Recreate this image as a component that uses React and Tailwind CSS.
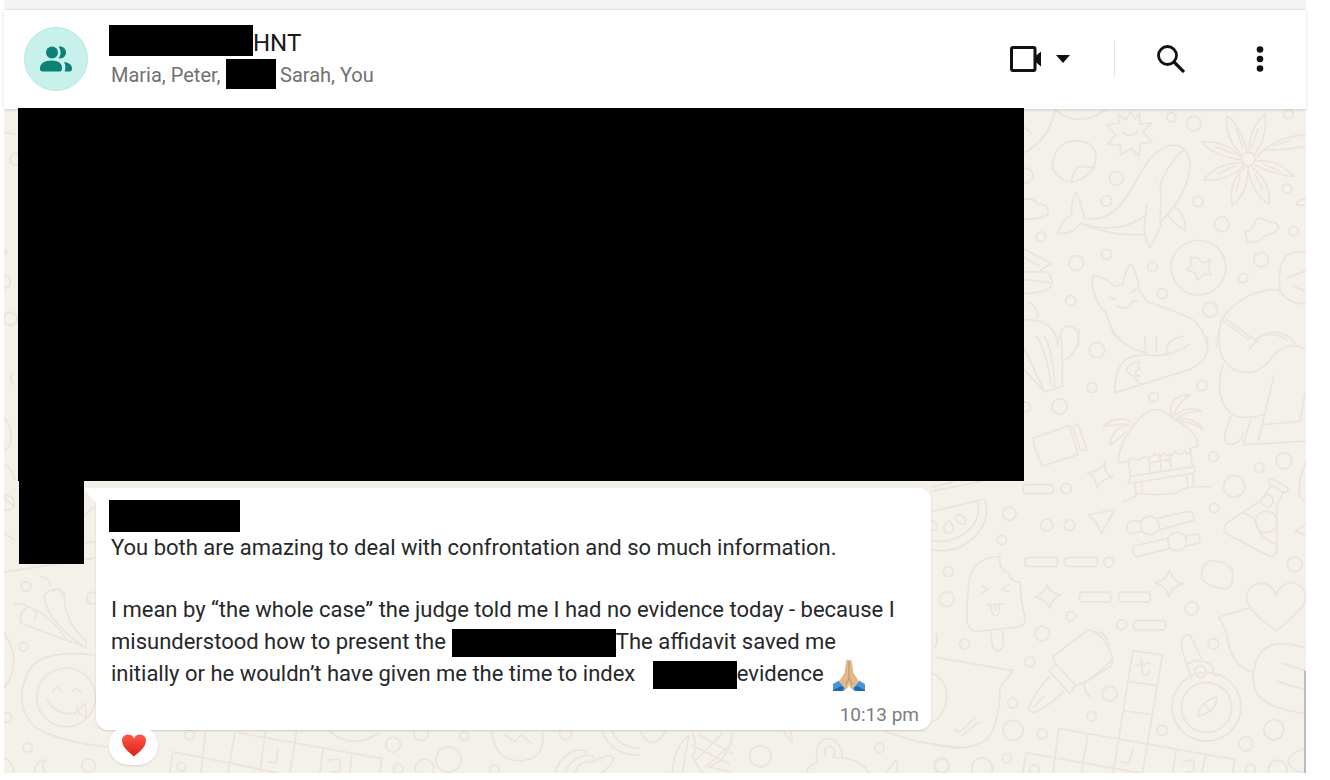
import React from 'react';
import clsx from 'clsx';

const Redacted = ({ className }) => (
  <span aria-hidden="true" className={clsx('inline-block shrink-0 bg-black', className)} />
);

const Dots = ({ items }) =>
  items.map(([cx, cy, r]) => <circle key={`${cx}-${cy}-${r}`} cx={cx} cy={cy} r={r} />);

const Strokes = ({ items }) => items.map((d) => <path key={d} d={d} />);

// each wallpaper section is drawn on its own grid, three units to a pixel
const Section = ({ x, y, paths, dots }) => (
  <g transform={`translate(${x} ${y}) scale(0.33333)`}>
    <Strokes items={paths} />
    <Dots items={dots} />
  </g>
);

const sections = [
  {
    x: 1010,
    y: 100,
    paths: [
      'M45 160 Q120 120 137 30 M45 85 L68 105',
      'M135 32 Q205 90 290 32',
      'M150 145 Q185 110 240 135 Q265 155 258 185 Q245 235 190 248 Q150 250 128 205 Q130 165 150 145 M258 205 L208 202 Q190 215 186 246',
      'M290 78 L330 72 L325 45 L350 62 L362 38 L378 60 L390 42 L390 75 L425 72 L400 100 L428 130 L392 132 L388 172 L365 148 L332 168 L332 138 L294 134 L318 108 Z M340 100 Q362 120 385 98',
      'M224 358 Q290 365 330 320 Q370 265 400 210 Q435 145 490 138 Q545 140 540 210 Q530 290 455 365 Q448 405 420 445 Q402 415 404 370 L412 315 M224 358 Q215 310 200 278 Q183 310 186 345 Q155 370 143 402 Q190 408 213 372 Q300 412 402 405 M213 372 Q330 410 412 345 M525 150 Q475 190 452 255 Q455 320 450 365 M475 348 Q495 378 527 392 Q528 345 495 320 M440 240 L442 241',
      'M695 168 Q640 110 652 52 Q690 75 712 160 M718 160 Q715 90 765 45 Q775 110 735 165 M742 172 Q800 110 885 108 M762 152 Q820 155 885 142 M738 185 Q805 180 852 232 Q790 225 735 198 M725 205 Q785 245 777 315 Q725 285 715 205 M705 205 Q655 245 667 318 Q710 290 715 210 M697 192 Q620 190 582 242 Q650 250 700 200 M693 175 Q650 125 575 128 Q610 170 693 182 M680 90 L698 145 M745 90 L725 145 M790 140 L840 125 M620 145 L675 165 M625 225 L675 200 M760 195 L810 215 M735 225 L758 270 M690 230 L680 275',
      'M45 300 Q75 295 85 315 Q120 315 115 345 Q100 360 45 360',
      'M45 450 L125 492 L90 515 M45 518 L110 518 Q128 530 128 550 Q125 580 45 583 M45 540 L120 550 M45 475 L90 500',
      'M705 400 Q730 390 740 360 Q755 352 775 368 Q805 365 806 388 Q790 405 765 410 Q735 440 712 425 Z',
      'M565 475 L578 492 L602 482 L595 505 L605 525 L580 525 L563 543 L555 520 L530 512 L545 500 L542 475 Z',
      'M272 625 Q240 560 250 530 Q285 530 315 560 Q330 560 340 555 Q345 510 365 494 Q385 530 388 570 L410 605 M272 625 L290 640 Q300 690 330 720 M300 595 L318 600 M365 580 L385 565 M320 618 Q345 640 370 605 L388 605 M410 605 Q480 630 540 655 Q580 680 592 740',
      'M810 570 Q800 470 850 460 L885 458 M805 570 Q700 570 635 660 L715 720 M635 660 Q625 700 620 740 M805 570 Q840 620 885 612 M830 535 L885 515 M850 560 L885 575 M735 720 Q780 690 830 720',
      'M45 660 Q140 660 145 740 M60 610 Q90 630 82 655 M145 740 Q150 680 180 680 Q215 690 205 740',
      'M860 315 Q865 300 885 300 M860 318 L885 318',
    ],
    dots: [
      [485, 55, 14], [552, 74, 22], [320, 238, 21], [290, 305, 16], [565, 307, 15], [636, 376, 22],
      [831, 268, 14], [851, 395, 14], [754, 481, 22], [700, 537, 14], [566, 505, 82], [428, 503, 15],
      [457, 583, 15], [291, 465, 15], [200, 492, 22], [183, 604, 15], [94, 413, 15], [48, 229, 22],
      [601, 631, 22], [715, 180, 20], [835, 45, 14],
    ],
  },
  {
    x: 1010,
    y: 330,
    paths: [
      'M45 60 L105 187 L158 170 Q160 80 155 20 M45 120 L105 187 M105 20 Q135 80 135 180 M80 20 Q110 60 125 170 M160 95 Q210 70 208 0',
      'M305 5 Q350 60 410 70 M400 75 Q470 90 540 45 M315 190 Q315 75 395 78 M315 190 L540 120 Q610 90 590 20 M350 120 Q365 95 392 98 Q375 110 390 118 Q365 130 390 140 Q360 145 350 120 M375 145 L392 165 M405 20 L408 65 M440 20 L440 68 M470 78 Q465 30 520 20',
      'M72 325 L180 288 L205 375 L98 410 L72 345 Z M190 295 L205 283 L232 360 L212 362 Z',
      'M232 428 Q270 428 285 398 Q282 435 310 442 Q270 450 262 476 Q260 440 232 428',
      'M325 395 Q330 340 370 290 Q430 205 485 265 Q560 300 565 350 L545 355 Q535 385 525 363 Q510 385 495 365 Q480 390 465 370 Q445 390 435 370 Q420 395 405 380 Q385 400 370 385 Q345 405 325 395 M365 275 Q320 255 280 292 Q320 280 360 285 Q310 290 300 345 Q330 330 350 305 M485 265 Q470 195 540 197 Q500 225 490 262 Q530 225 575 245 Q525 245 495 270 Q550 260 580 298 Q540 275 505 275',
      'M355 388 L362 435 M415 380 L422 430 M450 372 L455 425 M480 370 L484 415 M540 355 L548 410 M422 400 L484 388 M362 440 L555 410 L555 430 L355 462 Z M375 462 L380 500 M395 460 L398 485 M530 435 L535 470 M548 435 L552 465 M340 515 Q380 505 380 490 Q440 500 500 490 Q530 465 600 472',
      'M630 0 Q615 80 670 120 Q740 150 790 80 Q830 30 885 60 M650 -30 L745 40 M720 60 Q760 -10 820 15 Q850 25 855 45 M640 105 Q610 200 660 250 Q700 275 760 255 M792 138 L745 335 M762 285 L870 275 L885 190 M700 345 L885 335 M700 345 L722 270 M665 260 Q630 330 655 345 Q690 345 700 310',
      'M45 465 L125 465 Q140 478 125 492 L45 492 Q35 478 45 465',
      'M235 555 L315 540 L275 612 L262 580 Z',
      'M355 580 Q370 570 395 575 M445 565 L535 545 Q555 545 552 572 L445 602 M395 605 L360 612 Q345 600 355 580 M475 625 L375 648 Q360 665 380 682 L480 655 M525 620 L560 612 Q575 620 568 640 L525 650',
      'M780 445 L835 475 Q835 490 820 488 L778 462 Z M785 465 L755 510 L650 580 Q635 600 650 612 L780 680 Q800 680 800 660 L800 530 L820 485 M700 550 Q740 560 745 600 Q770 640 795 640',
      'M50 683 L140 683 Q150 697 140 710 L50 710 Q40 697 50 683 M170 683 L258 683 Q270 697 258 710 L170 710 Q158 697 170 683',
      'M885 400 Q850 500 885 515 M885 585 L855 605 L885 615',
    ],
    dots: [
      [262, 62, 23], [247, 174, 15], [150, 231, 23], [48, 232, 15], [576, 168, 15], [432, 203, 14],
      [611, 381, 15], [822, 394, 24], [748, 414, 14], [673, 470, 32], [613, 535, 14], [772, 513, 18],
      [769, 576, 32], [170, 477, 16], [112, 586, 18], [180, 586, 16], [0, 552, 20], [297, 697, 15],
      [420, 587, 28], [502, 635, 28],
    ],
  },
  {
    x: 920,
    y: 470,
    paths: [
      'M35 65 L185 35 M35 52 L100 38',
      'M38 125 L195 88 Q215 140 175 190 Q120 255 38 240 M175 95 Q185 150 145 185 Q95 225 38 212',
      'M75 185 Q70 165 88 152 Q108 170 98 188 Q85 195 75 185 M108 150 Q105 132 125 135 Q145 150 135 162 Q120 165 108 150',
    ],
    dots: [[38, 168, 14]],
  },
  {
    x: 920,
    y: 540,
    paths: [
      'M152 105 Q175 50 242 50 Q235 90 268 98 Q270 125 302 128 Q305 190 318 238 Q315 262 290 262 L170 275 Q145 272 143 240 Q142 165 152 105 M215 278 L218 315 Q235 350 252 315 L250 272',
      'M188 138 L206 148 L190 160 M268 135 L245 148 L268 156 M203 195 L250 192 M215 196 L218 220 Q230 235 240 218 L240 195 M228 200 L228 212',
      'M345 170 Q375 165 382 135 Q390 162 425 165 Q395 178 390 205 Q380 180 345 170 M705 128 Q740 125 750 90 Q758 125 790 132 Q755 140 747 170 Q740 138 705 128',
      'M485 157 L570 157 Q580 171 570 186 L485 186 Q473 171 485 157 M603 157 L687 157 Q698 171 687 186 L603 186 Q590 171 603 157 M647 242 L733 242 Q745 256 733 270 L647 270 Q635 256 647 242',
      'M845 115 Q845 65 880 62 Q945 75 938 105 Q940 145 915 147 Q860 140 845 115',
      'M1070 272 Q975 210 980 165 Q990 130 1030 130 Q1060 135 1068 168 Q1080 130 1120 128 Q1160 140 1156 180 Q1150 210 1070 272',
      'M985 205 L895 232 Q920 260 925 310 Q940 380 1000 397 M1158 325 Q1040 285 1010 360 Q990 420 1010 460 Q1050 510 1158 520 M1085 370 L1158 392 M1075 425 L1158 450',
      'M408 372 L400 350 L505 270 Q550 275 580 355 Q520 420 470 437 L408 372 M408 372 L388 392 L450 460 L468 435 M390 410 Q350 450 328 500 Q325 520 350 515 Q400 490 430 455 M345 500 L372 470 M535 275 Q560 280 568 315 M580 355 L575 378 L495 428 Q490 455 512 470',
      'M640 332 L728 345 L668 700 M640 332 L580 700 M627 425 L712 437 M615 512 L697 524 M665 355 L668 400 M648 378 L690 368 M668 400 Q685 415 690 390',
      'M320 638 L310 700 M320 638 L660 698 M418 565 L945 658 L938 700 M418 565 L400 700 M505 582 L485 700 M770 628 L758 700 M857 645 L845 700 M640 625 L628 670 L605 665 M790 665 Q835 650 820 680 Q835 695 800 695',
      'M800 375 L785 320 Q785 280 810 285 L845 355 M800 375 L815 415 M800 375 Q840 345 880 380 Q875 400 890 410',
      'M835 530 Q835 490 890 470 Q895 510 835 530 M850 490 L875 515',
      'M50 352 L280 392 Q260 420 242 440 Q240 560 200 600 Q150 630 100 620 L0 605 M38 400 Q85 420 82 475 Q75 530 38 545 M105 568 L122 575 L165 535 M130 585 L180 545 M50 280 Q60 300 45 325',
      'M1158 625 Q1105 640 1105 665 Q1120 700 1158 695',
    ],
    dots: [
      [87, 95, 15], [82, 178, 22], [136, 312, 15], [368, 281, 22], [454, 229, 14], [330, 366, 15],
      [570, 461, 22], [279, 489, 15], [516, 529, 14], [281, 571, 30], [368, 581, 15], [262, 654, 14],
      [68, 678, 21], [188, 684, 31], [606, 255, 15], [816, 205, 20], [881, 312, 16], [1124, 73, 22],
      [1062, 569, 30], [978, 611, 21], [727, 571, 15], [842, 395, 17], [860, 500, 103], [860, 502, 75],
      [992, 688, 15], [1073, 688, 28], [345, 688, 14], [247, 0, 14],
    ],
  },
  {
    x: 0,
    y: 470,
    paths: [
      'M12 308 L290 265 M255 220 L290 215 M12 80 L50 110 M12 185 L50 210 M250 145 L290 110',
      'M140 375 Q165 345 200 370 Q195 450 265 515 Q270 540 245 525 L70 460 Q60 430 90 410 Q150 430 200 500 M140 375 Q140 450 265 535 M50 405 Q80 395 90 410 M130 320 Q165 330 155 350 M90 410 Q125 415 110 450 M165 365 Q190 345 195 380',
      'M12 480 Q85 570 12 665',
      'M290 555 Q110 535 85 620 Q50 710 110 770 Q180 815 330 830 M165 665 Q175 640 192 665 M225 665 Q235 645 248 668 M148 685 Q170 735 230 730 L262 700 M235 710 Q250 745 265 740 L262 700 M12 860 Q50 875 48 910 M110 910 Q110 870 145 870 Q125 890 145 910',
      'M525 845 L515 910 M525 845 L780 895 M622 790 L608 910 M710 790 L690 910',
    ],
    dots: [[85, 350, 14], [78, 530, 13], [205, 682, 88], [28, 742, 14], [90, 832, 14], [272, 886, 20], [285, 385, 18], [28, 100, 22], [575, 795, 14], [550, 890, 13]],
  },
  {
    x: 240,
    y: 680,
    paths: [
      'M0 158 L430 235 L425 280 M82 155 L65 280 M175 155 L155 280 M0 255 L120 278 M255 205 L245 280 M340 225 L335 280 M120 205 L115 248 L92 245 M270 240 Q320 230 302 258 Q320 278 280 275',
      'M275 155 Q340 210 420 160 M760 155 Q770 245 850 242 Q920 235 912 160 M800 165 L830 185 L845 165 L880 190',
      'M1090 155 Q1120 225 1200 225 M1120 155 Q1140 200 1200 205',
      'M950 280 Q960 230 1010 210 Q1040 205 1045 225 M980 280 Q990 235 1045 225 Q1075 225 1065 245 Q1110 215 1125 235 Q1115 260 1085 280 M1010 275 Q1020 240 1065 245',
    ],
    dots: [[464, 194, 22], [480, 266, 14], [558, 265, 28], [630, 238, 38], [677, 168, 13], [768, 268, 14], [980, 160, 18], [548, 160, 22]],
  },
  {
    x: 560,
    y: 620,
    paths: [
      'M245 335 Q280 400 320 335 M340 458 Q345 380 390 345 L380 400 L370 458 M400 340 Q420 380 400 410 L430 458 M520 340 Q510 420 450 440 L515 455 M400 375 L510 430 M420 345 L520 400 M490 340 L410 420 M520 370 L440 440',
      'M775 425 Q760 360 810 355 Q850 365 850 415 M800 410 Q790 375 815 378 Q835 390 820 412 M775 425 Q740 440 745 458 M820 412 Q900 410 930 458 M980 458 L1010 420 Q1020 440 1010 458',
      'M675 335 Q690 360 700 365 L695 335 M980 335 Q1090 375 1200 385',
    ],
    dots: [[604, 408, 32], [961, 383, 14], [1146, 436, 22]],
  },
  {
    x: 0,
    y: 100,
    paths: ['M12 100 L52 105 M12 465 L30 460 L20 450 M12 950 Q45 975 40 1020 Q35 1050 12 1055 M12 1090 Q45 1100 50 1140 M48 820 Q30 840 48 855'],
    dots: [[18, 548, 20], [38, 658, 20], [55, 180, 18]],
  },
];

const Wallpaper = () => (
  <svg
    aria-hidden="true"
    viewBox="4 109 1302 664"
    preserveAspectRatio="xMaxYMin slice"
    className="absolute inset-0 h-full w-full"
    fill="none"
    stroke="#ebe3dc"
    strokeWidth="5"
    strokeLinecap="round"
    strokeLinejoin="round"
  >
    {sections.map((section) => (
      <Section key={`${section.x}-${section.y}`} {...section} />
    ))}
  </svg>
);

const GroupAvatar = () => (
  <div className="flex size-16 shrink-0 items-center justify-center rounded-full border border-[#b9e6e0] bg-[#c9f1ec]">
    <svg viewBox="0 0 32 26" className="h-[26px] w-8" fill="#0b8275">
      <circle cx="12" cy="6.5" r="6" />
      <path d="M18.5.7c4.200-.9 7.500 2 7.500 5.800s-3.300 6.700-7.500 5.800c2.800-3.400 2.800-8.200 0-11.600z" />
      <path d="M0 22c0-4.500 4.500-7.500 11.500-7.500S22 17.500 22 22v1c0 1.500-.8 2.500-2.300 2.500H2.500C1 25.500 0 24.500 0 23z" />
      <path d="M24 16c4.500.5 8 2.800 8 6.200v.8c0 1.500-1 2.500-2.500 2.500h-4.800c.8-2.700 1.200-6.500-.7-9.500z" />
    </svg>
  </div>
);

const HeartIcon = () => (
  <svg viewBox="0 0 24 23" className="h-[23px] w-6">
    <defs>
      <linearGradient id="heart" x1="0" y1="0" x2="0" y2="1">
        <stop offset="0" stopColor="#fb5a4c" />
        <stop offset="0.5" stopColor="#f03a2e" />
        <stop offset="1" stopColor="#d9201c" />
      </linearGradient>
    </defs>
    <path
      fill="url(#heart)"
      d="M12 22.500C8 19 0 13.500 0 6.500 0 3 2.700.5 6 .5c2.800 0 5 1.600 6 4 1-2.400 3.200-4 6-4 3.300 0 6 2.500 6 6 0 7-8 12.500-12 16z"
    />
  </svg>
);

const PrayingHands = () => (
  <svg role="img" aria-label="praying hands" viewBox="0 0 32 32" className="ml-1 inline-block size-8 align-middle">
    <path fill="#4a94dc" d="M0 25l6-3.500 7.500 6L11 32H0zM32 25l-6-3.500-7.500 6L21 32h11z" />
    <path fill="#2467ae" d="M0 31l8-4 3 1.500L9 32H0zM32 31l-8-4-3 1.500 2 3.500h9z" />
    <path
      fill="#e3b98c"
      d="M15.800 1.500C15 .2 13.500.6 13.200 2.500L11.500 14 6 22.500l7 8c2-1.500 3-3.500 3-6.500 0 3 1 5 3 6.500l7-8-5.500-8.500-1.700-11.500C18.500.6 16.800.2 15.800 1.500z"
    />
    <path fill="none" stroke="#b98a5c" strokeWidth="1" d="M16 2v18.500M16 20.500c-1.500 1-3 3.500-3 6M16 20.500c1.500 1 3 3.500 3 6" />
  </svg>
);

const ChatHeader = () => (
  <header className="relative z-10 flex h-[99px] items-center bg-white pr-8 pb-0.5 pl-5 shadow-[0_1px_3px_rgba(0,0,0,0.16)]">
    <GroupAvatar />
    <div className="ml-[21px] min-w-0 grow pb-1">
      <h1 className="flex h-[31px] items-center text-2xl leading-[31px] text-[#16181a]">
        <Redacted className="h-[31px] w-36" />
        <span className="pt-1.5">HNT</span>
      </h1>
      <p className="mt-[3px] flex h-[30px] items-center text-xl leading-[30px] text-[#6f7173]">
        <span className="w-[117px] pt-0.5 pl-0.5 whitespace-nowrap">Maria, Peter,</span>
        <Redacted className="h-[30px] w-[50px]" />
        <span className="pt-0.5 pl-1 whitespace-nowrap">Sarah, You</span>
      </p>
    </div>
    <div className="flex items-center">
      <button type="button" aria-label="Video call" className="flex items-center gap-3.5">
        <svg viewBox="0 0 32 26" className="h-[26px] w-8" fill="none">
          <rect x="1.500" y="1.500" width="23.500" height="23" rx="1.500" stroke="#111" strokeWidth="3" />
          <path d="M25 10.500l6-5v15l-6-5z" fill="#111" />
        </svg>
        <svg viewBox="0 0 14 8" className="h-2 w-3.5" fill="#111">
          <path d="M0 0h14L7 8z" />
        </svg>
      </button>
      <span className="mr-[42px] ml-11 h-9 w-px bg-[#e4e4e4]" />
      <button type="button" aria-label="Search">
        <svg viewBox="0 0 28 28" className="size-7" fill="none" stroke="#111" strokeWidth="2.800">
          <circle cx="10.500" cy="10.500" r="9" />
          <path d="M17 17l10 10" strokeWidth="3.200" />
        </svg>
      </button>
      <button type="button" aria-label="Menu" className="ml-[61px] flex w-7 justify-center">
        <svg viewBox="0 0 8 26" className="h-[26px] w-2" fill="#111">
          <circle cx="4" cy="3.500" r="3.300" />
          <circle cx="4" cy="13" r="3.300" />
          <circle cx="4" cy="22.500" r="3.300" />
        </svg>
      </button>
    </div>
  </header>
);

const Message = () => (
  <article className="relative mt-[7px] ml-3 w-[835px] rounded-xl rounded-tl-none bg-white pt-3 pr-3 pb-0.5 pl-[13px] shadow-[0_1px_2px_rgba(0,0,0,0.16)]">
    <svg viewBox="0 0 13 16" className="absolute top-0 -left-3 h-4 w-[13px]" fill="#fff">
      <path d="M2 0h11v16L1 2.500Q0 0 2 0z" />
    </svg>
    <div className="flex">
      <Redacted className="h-8 w-[131px]" />
    </div>
    <div className="pl-0.5 text-[22px] leading-8 whitespace-nowrap text-[#26282a]">
      <p>You both are amazing to deal with confrontation and so much information.</p>
      <p className="mt-[30px]">
        I mean by “the whole case” the judge told me I had no evidence today - because I
        <br />
        misunderstood how to present the
        <Redacted className="ml-1.5 h-7 w-[164px] align-middle" />
        The affidavit saved me
        <br />
        initially or he wouldn’t have given me the time to index{' '}
        <Redacted className="ml-3 h-7 w-[84px] align-middle" />
        evidence <PrayingHands />
      </p>
    </div>
    <time className="mt-[11px] block text-right text-[19px] leading-[26px] text-[#7b7d7f]">10:13 pm</time>
  </article>
);

const App = () => {
  return (
    <main className="bg-white pr-6 pb-[7px] pl-1 font-[Roboto,'Liberation_Sans',sans-serif]">
      <div className="h-2.5 border-b border-[#ece8e5] bg-[#f6f4f2]" />
      <ChatHeader />
      <section className="relative bg-[#f4f1ea] pb-2">
        <Wallpaper />
        <div className="relative z-20 -mt-px ml-3.5 h-[373px] w-[1006px] max-w-full bg-black" />
        <div className="relative flex items-start pl-[15px]">
          <Redacted className="h-[83px] w-[65px]" />
          <Message />
        </div>
        <button
          type="button"
          aria-label="Heart reaction"
          className="relative -mt-1 ml-[105px] flex h-[39px] w-[49px] items-center justify-center rounded-full bg-white shadow-[0_1px_2px_rgba(0,0,0,0.12)]"
        >
          <HeartIcon />
        </button>
        <div className="absolute right-0 bottom-0 h-[102px] w-0.5 bg-[#bdbbb7]" />
      </section>
    </main>
  );
};

export default App;
